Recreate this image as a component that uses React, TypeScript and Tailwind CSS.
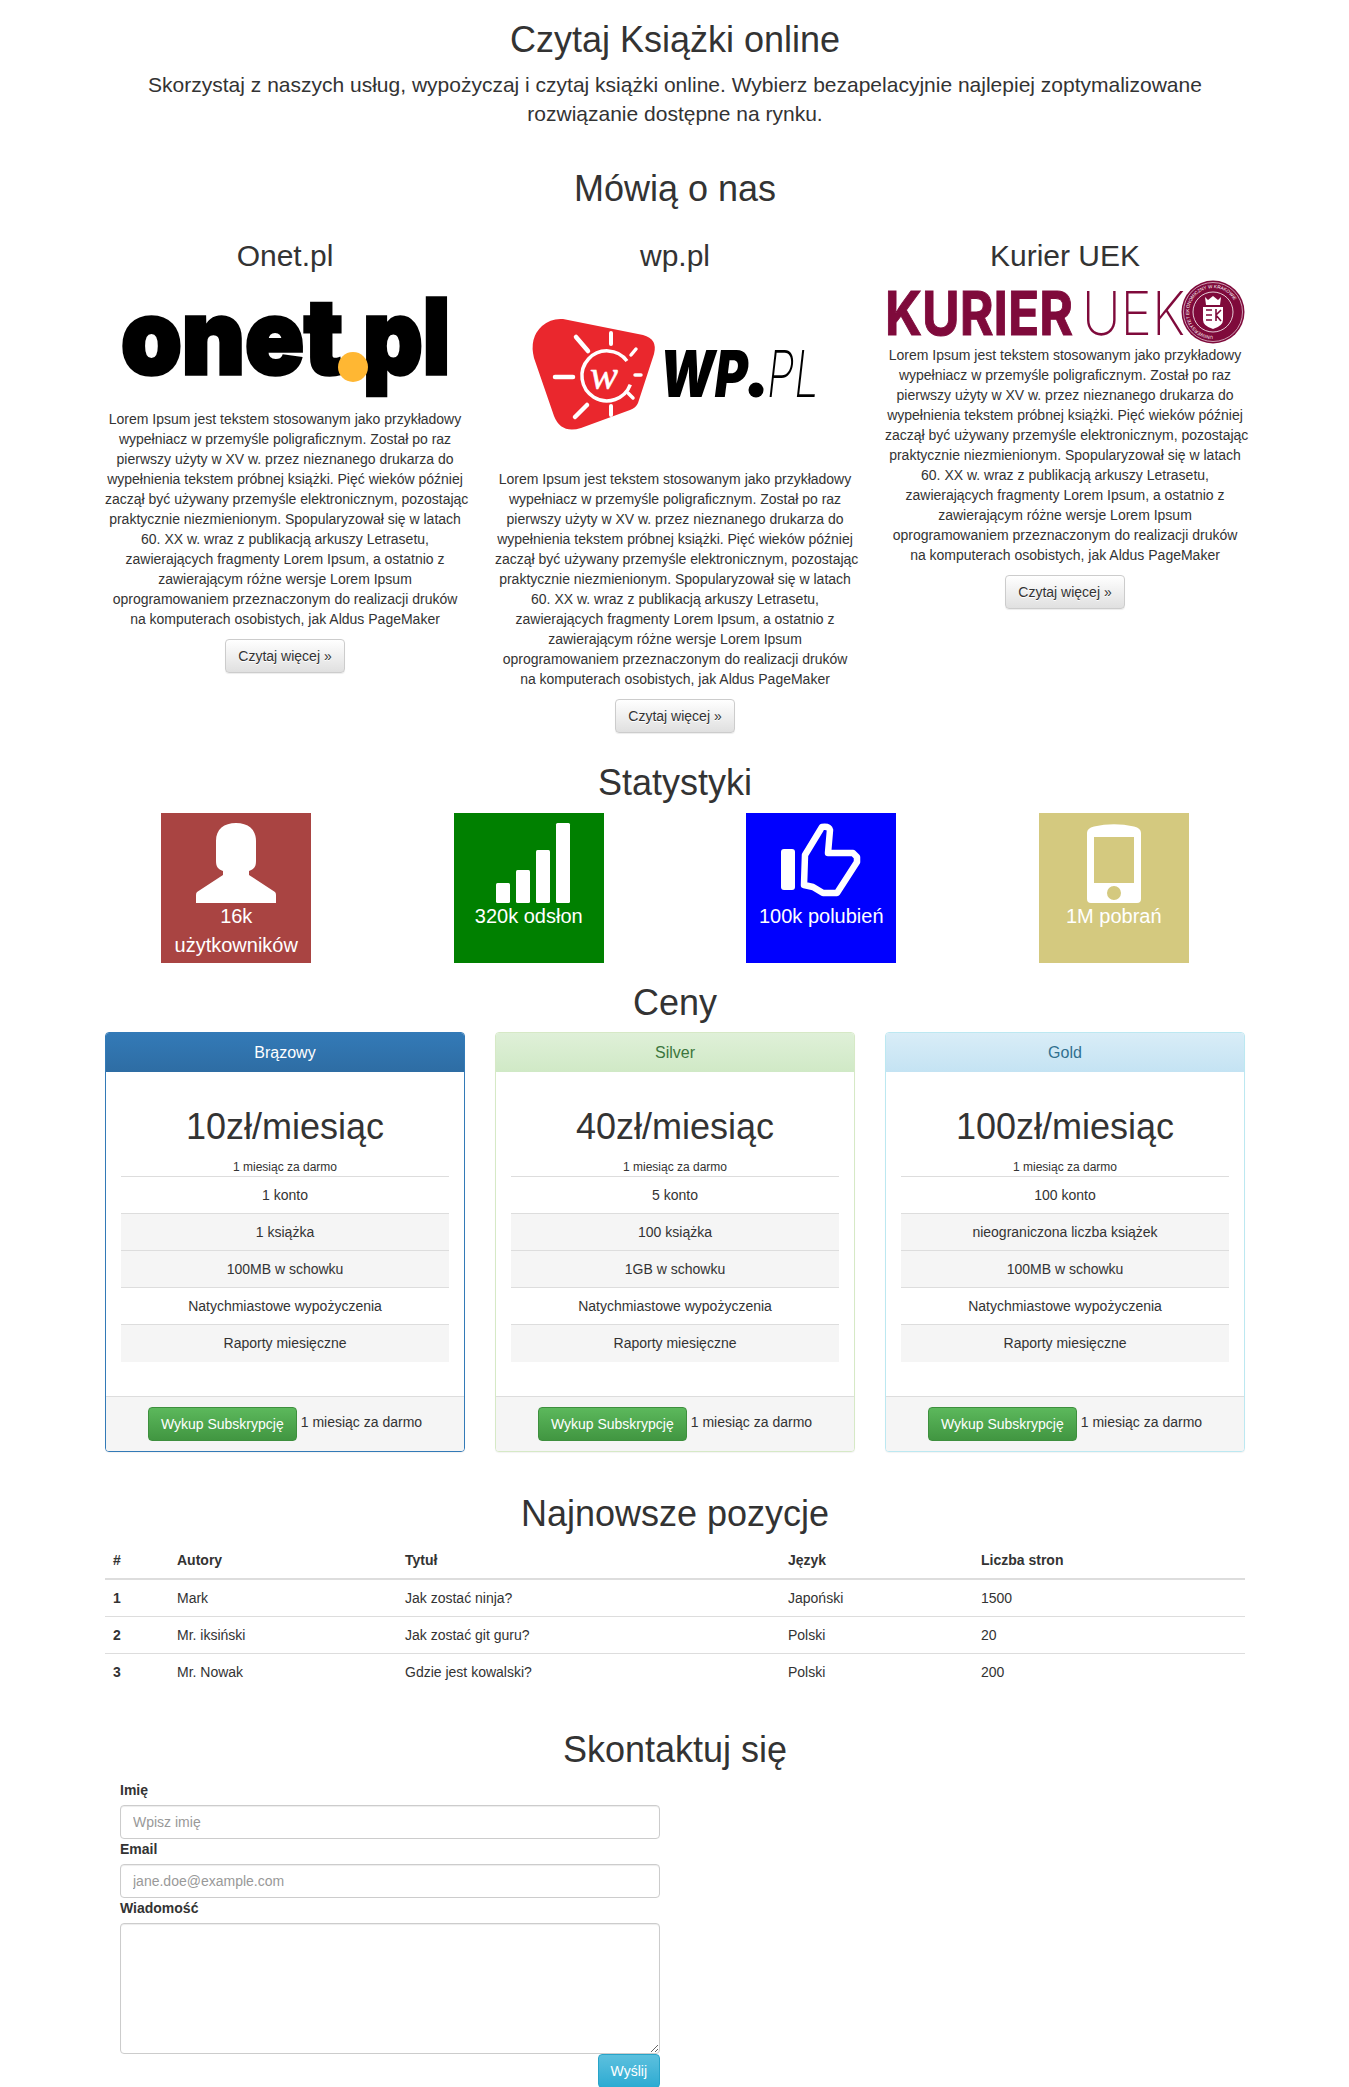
import React from "react";

const LOREM = [
  "Lorem Ipsum jest tekstem stosowanym jako przykładowy",
  "wypełniacz w przemyśle poligraficznym. Został po raz",
  "pierwszy użyty w XV w. przez nieznanego drukarza do",
  "wypełnienia tekstem próbnej książki. Pięć wieków później",
  "zaczął być używany przemyśle elektronicznym, pozostając",
  "praktycznie niezmienionym. Spopularyzował się w latach",
  "60. XX w. wraz z publikacją arkuszy Letrasetu,",
  "zawierających fragmenty Lorem Ipsum, a ostatnio z",
  "zawierającym różne wersje Lorem Ipsum",
  "oprogramowaniem przeznaczonym do realizacji druków",
  "na komputerach osobistych, jak Aldus PageMaker",
];

function OnetLogo() {
  return (
    <svg viewBox="0 0 360 131" className="block h-[131px] w-[360px]">
      <text x="16" y="96" fontFamily="Inter" fontWeight="900" fontSize="104" stroke="#000" strokeWidth="3.5" textLength="222" lengthAdjust="spacingAndGlyphs">onet</text>
      <text x="258" y="96" fontFamily="Inter" fontWeight="900" fontSize="104" stroke="#000" strokeWidth="3.5" textLength="87" lengthAdjust="spacingAndGlyphs">pl</text>
      <circle cx="248" cy="89" r="15" fill="#ffb733" />
    </svg>
  );
}

function WpLogo() {
  const rays = [
    [81, 59, 93, 73, 4.5],
    [116, 55, 116, 66, 4],
    [141, 71, 136, 77, 3.5],
    [60, 99, 78, 99, 4.5],
    [140, 97, 146, 97, 3.5],
    [133, 115, 138, 120, 3.5],
    [92, 127, 80, 139, 4.5],
    [116, 128, 116, 137, 4],
  ];
  return (
    <svg viewBox="0 0 360 191" className="block h-[191px] w-[360px]">
      <path d="M68 41 L148 57 Q163 61 159 76 L143 125 Q141 130 135 132 L86 150 Q66 156 59 138 L39 80 Q34 60 47 48 Q56 40 68 41 Z" fill="#ea272d" />
      {rays.map((r, i) => (
        <line key={i} x1={r[0]} y1={r[1]} x2={r[2]} y2={r[3]} stroke="#fff" strokeWidth={r[4]} strokeLinecap="round" />
      ))}
      <path d="M134 86 A25 25 0 1 0 134 110" fill="none" stroke="#fff" strokeWidth="3.5" transform="rotate(-8 111 99)" />
      <text x="95" y="111" fontFamily="Liberation Serif" fontStyle="italic" fontSize="42" fill="#fff" stroke="#fff" strokeWidth="0.5">w</text>
      <text x="165" y="119" fontFamily="Inter" fontStyle="italic" fontWeight="900" fontSize="64" textLength="88" lengthAdjust="spacingAndGlyphs">WP</text>
      <circle cx="261" cy="112" r="7.5" fill="#000" />
      <text x="272" y="119" fontFamily="Inter" fontStyle="italic" fontWeight="200" fontSize="64" textLength="52" lengthAdjust="spacingAndGlyphs">PL</text>
    </svg>
  );
}

function KurierLogo() {
  const c = "#7f0a3b";
  return (
    <svg viewBox="0 0 360 67" className="block h-[67px] w-[360px]">
      <text x="0" y="57" fontFamily="Inter" fontWeight="700" fontSize="60" fill={c} stroke={c} strokeWidth="1" textLength="188" lengthAdjust="spacingAndGlyphs">KURIER</text>
      <text x="197" y="57" fontFamily="Inter" fontWeight="200" fontSize="60" fill={c} textLength="103" lengthAdjust="spacingAndGlyphs">UEK</text>
      <circle cx="328" cy="34" r="31.5" fill={c} />
      <circle cx="328" cy="34" r="29.5" fill="none" stroke="#fff" strokeWidth="0.6" />
      <circle cx="328" cy="34" r="20" fill="none" stroke="#fff" strokeWidth="0.8" />
      <defs>
        <path id="seal" d="M328 58 A24 24 0 1 1 328.1 58" />
      </defs>
      <text fontFamily="Liberation Sans" fontSize="4.6" fill="#fff">
        <textPath href="#seal">UNIWERSYTET EKONOMICZNY W KRAKOWIE</textPath>
      </text>
      <path d="M320 19 l3 3 l5-4 l5 4 l3-3 l-1 8 h-14 Z" fill="#fff" />
      <path d="M318 29 h20 v13 q0 6 -10 9 q-10 -3 -10 -9 Z" fill="#fff" />
      <path d="M321 32 h6 M321 37 h6 M321 42 h6 M331 31 v12 M331 37 l5-5 M331 37 l5 6" stroke={c} strokeWidth="1.6" fill="none" />
    </svg>
  );
}

function Review({ name, logo }: { name: string; logo: React.ReactNode }) {
  return (
    <div className="w-[360px] text-center">
      <h3 className="mb-[6px] text-[30px] leading-[33px]">{name}</h3>
      {logo}
      <p className="mb-[10px] whitespace-nowrap leading-[20px]">
        {LOREM.map((line) => (
          <span key={line} className="block">{line}</span>
        ))}
      </p>
      <button className="rounded-[4px] border border-[#ccc] bg-gradient-to-b from-white to-[#e0e0e0] px-3 py-[6px] text-[14px] leading-[20px] text-[#333] shadow-[0_1px_1px_rgba(0,0,0,0.075)] [text-shadow:0_1px_0_#fff]">
        Czytaj więcej »
      </button>
    </div>
  );
}

function UserIcon() {
  return (
    <svg viewBox="0 0 80 80" className="mx-auto block h-20 w-20" fill="#fff">
      <path d="M20 18 C20 6 28 0 40 0 C52 0 60 6 60 18 V38 C60 44 58 46 53 48 V52 L79 69 Q80 70 80 72 V80 H0 V72 Q0 70 1 69 L27 52 V48 C22 46 20 44 20 38 Z" />
    </svg>
  );
}

function BarsIcon() {
  return (
    <svg viewBox="0 0 80 80" className="mx-auto block h-20 w-20 overflow-visible" fill="#fff">
      <rect x="7" y="60" width="14" height="20" rx="1.5" />
      <rect x="27" y="47" width="14" height="33" rx="1.5" />
      <rect x="47" y="27" width="14" height="53" rx="1.5" />
      <rect x="67" y="0" width="14" height="80" rx="1.5" />
    </svg>
  );
}

function ThumbIcon() {
  return (
    <svg viewBox="0 0 80 80" className="mx-auto block h-20 w-20 overflow-visible">
      <rect x="0" y="26" width="14" height="41" rx="3" fill="#fff" />
      <path d="M41 4 L24 32 L23 62 L32 64 L42 70 L56 70 L76 39 L76 34 L72 30 L47 30 L49 7 Q48 3 41 4 Z" fill="none" stroke="#fff" strokeWidth="6.5" strokeLinejoin="round" />
    </svg>
  );
}

function PhoneIcon() {
  return (
    <svg viewBox="0 0 80 80" className="mx-auto block h-20 w-20">
      <path
        fillRule="evenodd"
        fill="#fff"
        d="M13 10 Q13 5 20 3.5 Q40 -1 60 3.5 Q67 5 67 10 V76 Q67 80 63 80 H17 Q13 80 13 76 Z M20 14 V60 H60 V14 Z M40 63 A7 7 0 1 0 40 77 A7 7 0 1 0 40 63 Z"
      />
    </svg>
  );
}

function Stat({ bg, icon, label }: { bg: string; icon: React.ReactNode; label: string }) {
  return (
    <div className="flex w-[292.5px] justify-center">
      <div className={`h-[150px] w-[150px] pt-[10px] text-center text-[20px] leading-[29px] text-white ${bg}`}>
        {icon}
        <div className="mt-[-1px]">{label}</div>
      </div>
    </div>
  );
}

const plans = [
  {
    name: "Brązowy",
    price: "10zł/miesiąc",
    rows: ["1 konto", "1 książka", "100MB w schowku"],
    border: "border-[#337ab7]",
    head: "border-[#337ab7] from-[#337ab7] to-[#2e6da4] text-white",
  },
  {
    name: "Silver",
    price: "40zł/miesiąc",
    rows: ["5 konto", "100 książka", "1GB w schowku"],
    border: "border-[#d6e9c6]",
    head: "border-[#d6e9c6] from-[#dff0d8] to-[#d0e9c6] text-[#3c763d]",
  },
  {
    name: "Gold",
    price: "100zł/miesiąc",
    rows: ["100 konto", "nieograniczona liczba książek", "100MB w schowku"],
    border: "border-[#bce8f1]",
    head: "border-[#bce8f1] from-[#d9edf7] to-[#c4e3f3] text-[#31708f]",
  },
];

function Plan({ plan }: { plan: (typeof plans)[number] }) {
  const rows = [...plan.rows, "Natychmiastowe wypożyczenia", "Raporty miesięczne"];
  return (
    <div className={`h-[420px] w-[360px] overflow-hidden rounded-[4px] border bg-white shadow-[0_1px_1px_rgba(0,0,0,0.05)] ${plan.border}`}>
      <div className={`h-[39px] bg-gradient-to-b text-center text-[16px] leading-[39px] ${plan.head}`}>{plan.name}</div>
      <div className="h-[324px] px-[15px] pt-[35px] text-center">
        <h2 className="mb-[11px] text-[36px] leading-[40px]">{plan.price}</h2>
        <div className="h-[19px] border-b border-[#ddd] text-[12px] leading-[18px]">1 miesiąc za darmo</div>
        {rows.map((r, i) => (
          <div key={r} className={`h-[37px] border-b border-[#ddd] leading-[36px] last:border-b-0 ${i === 1 || i === 2 || i === 4 ? "bg-[#f5f5f5]" : ""}`}>
            {r}
          </div>
        ))}
      </div>
      <div className="flex h-[56px] items-start justify-center gap-[4px] border-t border-[#ddd] bg-[#f5f5f5] pt-[10px]">
        <button className="rounded-[4px] border border-[#3e8f3e] bg-gradient-to-b from-[#5cb85c] to-[#419641] px-3 py-[6px] leading-[20px] text-white">
          Wykup Subskrypcję
        </button>
        <span className="leading-[31px]">1 miesiąc za darmo</span>
      </div>
    </div>
  );
}

const books = [
  ["1", "Mark", "Jak zostać ninja?", "Japoński", "1500"],
  ["2", "Mr. iksiński", "Jak zostać git guru?", "Polski", "20"],
  ["3", "Mr. Nowak", "Gdzie jest kowalski?", "Polski", "200"],
];

function Heading({ children, className }: { children: React.ReactNode; className: string }) {
  return <h2 className={`text-center text-[36px] leading-[40px] ${className}`}>{children}</h2>;
}

export default function App() {
  const input =
    "block h-[34px] w-full rounded-[4px] border border-[#ccc] px-3 text-[14px] shadow-[inset_0_1px_1px_rgba(0,0,0,0.075)] placeholder:text-[#999]";
  return (
    <div className="h-[2087px] overflow-hidden bg-white font-['Liberation_Sans',Arial,sans-serif] text-[14px] leading-[20px] text-[#333]">
      <div className="ml-[105px] w-[1140px]">
        <Heading className="pt-[20px]">Czytaj Książki online</Heading>
        <p className="mx-auto mt-[10px] w-[1110px] text-center text-[21px] leading-[29px]">
          Skorzystaj z naszych usług, wypożyczaj i czytaj książki online. Wybierz bezapelacyjnie najlepiej zoptymalizowane rozwiązanie dostępne na rynku.
        </p>
        <Heading className="mt-[41px]">Mówią o nas</Heading>

        <div className="mt-[30px] flex h-[524px] items-start justify-between">
          <Review name="Onet.pl" logo={<OnetLogo />} />
          <Review name="wp.pl" logo={<WpLogo />} />
          <Review name="Kurier UEK" logo={<KurierLogo />} />
        </div>

        <Heading className="">Statystyki</Heading>
        <div className="mx-[-15px] mt-[10px] flex">
          <Stat bg="bg-[#a94442]" icon={<UserIcon />} label="16k użytkowników" />
          <Stat bg="bg-[#008000]" icon={<BarsIcon />} label="320k odsłon" />
          <Stat bg="bg-[#0000ff]" icon={<ThumbIcon />} label="100k polubień" />
          <Stat bg="bg-[#d4c97f]" icon={<PhoneIcon />} label="1M pobrań" />
        </div>

        <Heading className="mt-[20px]">Ceny</Heading>
        <div className="mt-[9px] flex justify-between">
          {plans.map((p) => (
            <Plan key={p.name} plan={p} />
          ))}
        </div>

        <Heading className="mt-[42px]">Najnowsze pozycje</Heading>
        <table className="mt-[8px] w-full table-fixed">
          <colgroup>
            <col className="w-[64px]" />
            <col className="w-[228px]" />
            <col className="w-[383px]" />
            <col className="w-[193px]" />
            <col />
          </colgroup>
          <thead>
            <tr className="border-b-2 border-[#ddd] text-left">
              {["#", "Autory", "Tytuł", "Język", "Liczba stron"].map((h) => (
                <th key={h} className="px-2 py-2 font-bold">{h}</th>
              ))}
            </tr>
          </thead>
          <tbody>
            {books.map((b) => (
              <tr key={b[0]} className="border-b border-[#ddd] last:border-b-0">
                <td className="px-2 py-2 font-bold">{b[0]}</td>
                <td className="px-2 py-2">{b[1]}</td>
                <td className="px-2 py-2">{b[2]}</td>
                <td className="px-2 py-2">{b[3]}</td>
                <td className="px-2 py-2">{b[4]}</td>
              </tr>
            ))}
          </tbody>
        </table>

        <Heading className="mt-[40px]">Skontaktuj się</Heading>
        <form className="ml-[15px] mt-[10px] w-[540px]">
          <label className="mb-[5px] block font-bold">Imię</label>
          <input className={input} placeholder="Wpisz imię" />
          <label className="mb-[5px] block font-bold">Email</label>
          <input className={input} placeholder="jane.doe@example.com" />
          <label className="mb-[5px] block font-bold">Wiadomość</label>
          <textarea className="block h-[131px] w-full rounded-[4px] border border-[#ccc] px-3 py-[6px] shadow-[inset_0_1px_1px_rgba(0,0,0,0.075)]" />
          <div className="flex justify-end">
            <button className="rounded-[4px] border border-[#28a4c9] bg-gradient-to-b from-[#5bc0de] to-[#2aabd2] px-3 py-[6px] leading-[20px] text-white">
              Wyślij
            </button>
          </div>
        </form>
      </div>
    </div>
  );
}
